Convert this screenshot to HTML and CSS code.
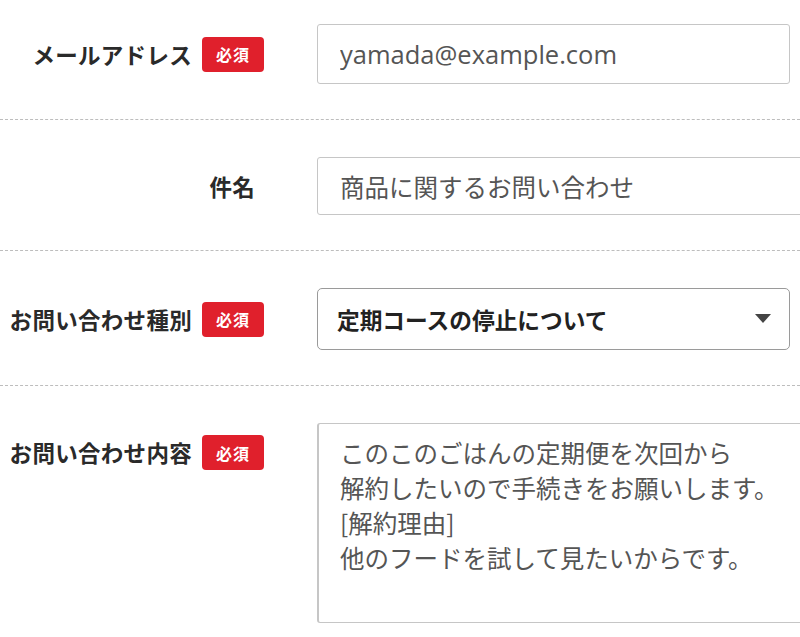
FILE: index.html
```html
<!DOCTYPE html>
<html lang="ja">
<head>
<meta charset="utf-8">
<title>お問い合わせ</title>
<link rel="stylesheet" href="styles.css">
</head>
<body>
<form class="form">
  <div class="row">
    <div class="label"><span class="label-text">メールアドレス</span><span class="badge">必須</span></div>
    <div class="field"><input class="input input-email" type="text" value="yamada@example.com"></div>
  </div>
  <div class="row">
    <div class="label label-plain"><span class="label-text">件名</span></div>
    <div class="field"><input class="input input-wide" type="text" value="商品に関するお問い合わせ"></div>
  </div>
  <div class="row">
    <div class="label"><span class="label-text">お問い合わせ種別</span><span class="badge">必須</span></div>
    <div class="field">
      <div class="select">
        <span class="select-text">定期コースの停止について</span>
        <svg class="select-arrow" width="16" height="9" viewBox="0 0 16 9"><path d="M0 0 L16 0 L8 9 Z" fill="#444"/></svg>
      </div>
    </div>
  </div>
  <div class="row row-top">
    <div class="label"><span class="label-text">お問い合わせ内容</span><span class="badge">必須</span></div>
    <div class="field"><textarea class="textarea">このこのごはんの定期便を次回から
解約したいので手続きをお願いします。
[解約理由]
他のフードを試して見たいからです。</textarea></div>
  </div>
</form>
</body>
</html>
```

FILE: styles.css
```css
html, body {
  margin: 0;
  padding: 0;
  background: #fff;
  overflow: hidden;
}
body {
  font-family: "Noto Sans CJK JP", "Noto Sans", sans-serif;
  color: #333;
  width: 800px;
}
.form {
  display: block;
}
.row {
  display: grid;
  grid-template-columns: 317px 1fr;
  align-items: center;
  padding: 37px 0 35px;
  border-bottom: 1px dashed #bdbdbd;
}
.row:first-child {
  padding-top: 24px;
}
.row:last-child {
  border-bottom: none;
}
.row-top {
  align-items: start;
}
.row-top .label {
  margin-top: 12px;
}
.label {
  display: flex;
  align-items: center;
  justify-content: flex-end;
  padding-right: 53px;
}
.label-plain {
  padding-right: 62px;
}
.label-text {
  font-size: 22.5px;
  font-weight: 700;
  color: #2a2a2a;
  letter-spacing: 0.3px;
  line-height: 1;
}
.badge {
  display: inline-flex;
  align-items: center;
  justify-content: center;
  margin-left: 10px;
  width: 62px;
  height: 35px;
  border-radius: 4px;
  background: #e0202c;
  color: #fff;
  font-size: 16px;
  font-weight: 700;
  letter-spacing: 1px;
}
.field {
  min-width: 0;
}
.input, .textarea {
  display: block;
  box-sizing: border-box;
  font-family: "Noto Sans CJK JP", "Noto Sans", sans-serif;
  font-size: 24.5px;
  color: #555;
  border: 1px solid #c6c6c6;
  border-radius: 3px;
  background: #fff;
  padding: 0 22px;
  outline: none;
}
.input {
  height: 60px;
}
.input-email {
  width: 473px;
  font-family: "Open Sans", "Noto Sans CJK JP", sans-serif;
  font-size: 25.5px;
}
.input-wide {
  width: 520px;
  height: 58px;
}
.select {
  box-sizing: border-box;
  width: 473px;
  height: 62px;
  border: 1px solid #9a9a9a;
  border-radius: 5px;
  display: flex;
  align-items: center;
  justify-content: space-between;
  padding: 0 18px 0 19px;
}
.select-text {
  font-size: 22.7px;
  font-weight: 700;
  color: #222;
}
.select-arrow {
  display: block;
  margin-top: -2px;
}
.textarea {
  width: 520px;
  height: 200px;
  padding-top: 11px;
  line-height: 35px;
  resize: none;
  overflow: hidden;
  border-left: 2px solid #c6c6c6;
  padding-left: 21px;
}
```
